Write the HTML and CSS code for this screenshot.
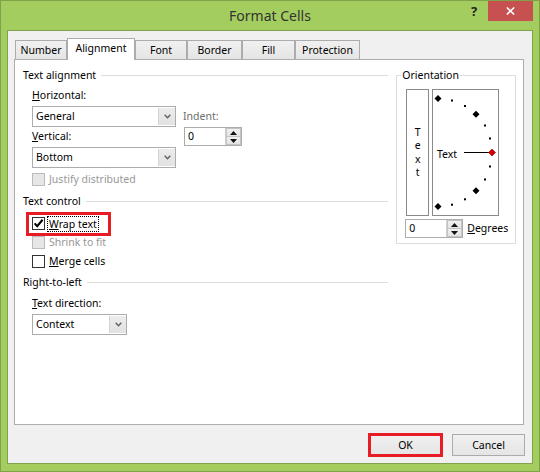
FILE: index.html
```html
<!DOCTYPE html>
<html>
<head>
<meta charset="utf-8">
<title>Format Cells</title>
<link rel="stylesheet" href="styles.css">
</head>
<body>
<div class="window">
  <div class="titlebar">
    <div class="tb-spacer"></div>
    <div class="title">Format Cells</div>
    <div class="controls">
      <span class="help">?</span>
      <span class="close"><svg width="9" height="8" viewBox="0 0 9 8"><path d="M0.8 0.5 L8.2 7.5 M8.2 0.5 L0.8 7.5" stroke="#fff" stroke-width="1.6" fill="none"/></svg></span>
    </div>
  </div>
  <div class="client">
    <div class="tabs">
      <div class="tab tab-number">Number</div>
      <div class="tab tab-align active">Alignment</div>
      <div class="tab tab-font">Font</div>
      <div class="tab tab-border">Border</div>
      <div class="tab tab-fill">Fill</div>
      <div class="tab tab-prot">Protection</div>
    </div>
    <div class="panel">
      <div class="left">
        <div class="section-head"><span>Text alignment</span><i class="rule"></i></div>
        <div class="align-block">
          <div class="col-main">
            <div class="label"><u>H</u>orizontal:</div>
            <div class="combo combo-wide">
              <span class="val">General</span>
              <span class="drop"><svg width="7" height="5" viewBox="0 0 7 5"><path d="M0.7 0.8 L3.5 3.8 L6.3 0.8" stroke="#606060" stroke-width="1.4" fill="none"/></svg></span>
            </div>
            <div class="label label-v"><u>V</u>ertical:</div>
            <div class="combo combo-wide">
              <span class="val">Bottom</span>
              <span class="drop"><svg width="7" height="5" viewBox="0 0 7 5"><path d="M0.7 0.8 L3.5 3.8 L6.3 0.8" stroke="#606060" stroke-width="1.4" fill="none"/></svg></span>
            </div>
          </div>
          <div class="col-indent">
            <div class="label dim">Indent:</div>
            <div class="spin spin-indent">
              <span class="val">0</span>
              <span class="spinbtns">
                <span class="sb"><svg width="7" height="4" viewBox="0 0 7 4"><path d="M3.5 0 L7 4 L0 4 Z" fill="#111"/></svg></span>
                <span class="sb"><svg width="7" height="4" viewBox="0 0 7 4"><path d="M0 0 L7 0 L3.5 4 Z" fill="#111"/></svg></span>
              </span>
            </div>
          </div>
        </div>
        <div class="check check-justify disabled"><span class="box"></span><span class="ctext">Justify distributed</span></div>

        <div class="section-head head-control"><span>Text control</span><i class="rule"></i></div>
        <div class="check check-wrap highlight"><span class="box"><svg width="11" height="11" viewBox="0 0 11 11"><path d="M1.6 5.4 L4.2 8.2 L9.6 1.8" stroke="#000" stroke-width="2.1" fill="none"/></svg></span><span class="ctext focus"><u>W</u>rap text</span></div>
        <div class="check check-row disabled"><span class="box"></span><span class="ctext">Shrink to fit</span></div>
        <div class="check check-row"><span class="box"></span><span class="ctext"><u>M</u>erge cells</span></div>

        <div class="section-head head-rtl"><span>Right-to-left</span><i class="rule"></i></div>
        <div class="label label-dir"><u>T</u>ext direction:</div>
        <div class="combo combo-ctx">
          <span class="val">Context</span>
          <span class="drop"><svg width="7" height="5" viewBox="0 0 7 5"><path d="M0.7 0.8 L3.5 3.8 L6.3 0.8" stroke="#606060" stroke-width="1.4" fill="none"/></svg></span>
        </div>
      </div>

      <fieldset class="orient">
        <legend>Orientation</legend>
        <div class="orient-body">
          <div class="orient-boxes">
            <div class="vtext"><span>T</span><span>e</span><span>x</span><span>t</span></div>
            <div class="dial">
              <svg width="65" height="125" viewBox="0 0 65 125">
                <g fill="#000">
                  <path d="M5 5 L8.5 8.5 L5 12 L1.5 8.5 Z"/>
                  <rect x="18" y="9.5" width="2" height="2"/>
                  <rect x="31" y="15" width="2" height="2"/>
                  <path d="M43 20.8 L46.5 24.3 L43 27.8 L39.5 24.3 Z"/>
                  <rect x="51" y="34.5" width="2" height="2"/>
                  <rect x="56" y="47.5" width="2" height="2"/>
                  <rect x="56" y="75.5" width="2" height="2"/>
                  <rect x="51" y="88.5" width="2" height="2"/>
                  <path d="M43 97.2 L46.5 100.7 L43 104.2 L39.5 100.7 Z"/>
                  <rect x="31" y="108.3" width="2" height="2"/>
                  <rect x="18" y="113.7" width="2" height="2"/>
                  <path d="M5 113 L8.5 116.5 L5 120 L1.5 116.5 Z"/>
                </g>
                <line x1="31" y1="62.5" x2="56" y2="62.5" stroke="#000" stroke-width="1"/>
                <path d="M59 59 L62.5 62.5 L59 66 L55.5 62.5 Z" fill="#d80000" stroke="#7a0000" stroke-width="0.6"/>
                <text x="4" y="68" class="dial-text">Text</text>
              </svg>
            </div>
          </div>
          <div class="deg-row">
            <div class="spin spin-deg">
              <span class="val">0</span>
              <span class="spinbtns">
                <span class="sb"><svg width="7" height="4" viewBox="0 0 7 4"><path d="M3.5 0 L7 4 L0 4 Z" fill="#111"/></svg></span>
                <span class="sb"><svg width="7" height="4" viewBox="0 0 7 4"><path d="M0 0 L7 0 L3.5 4 Z" fill="#111"/></svg></span>
              </span>
            </div>
            <span class="deg-label"><u>D</u>egrees</span>
          </div>
        </div>
      </fieldset>
    </div>
    <div class="buttons">
      <div class="btn btn-ok">OK</div>
      <div class="btn btn-cancel">Cancel</div>
    </div>
  </div>
</div>
</body>
</html>
```

FILE: styles.css
```css
*, *::before, *::after { box-sizing: border-box; }

body {
  margin: 0;
  font-family: "Noto Sans", "Open Sans", sans-serif;
  font-size: 10.5px;
  line-height: 15px;
  color: #000;
}

u { text-decoration: underline; text-underline-offset: 1px; }

.window {
  width: 540px;
  height: 472px;
  background: #a3cd5f;
  border: 1px solid #7fa24a;
  padding: 0 6px 7px 6px;
  display: flex;
  flex-direction: column;
}

.titlebar {
  height: 29px;
  display: grid;
  grid-template-columns: 1fr auto 1fr;
  align-items: start;
}

.title {
  font-size: 14px;
  line-height: 20px;
  padding-top: 5px;
  color: #333;
}

.controls {
  justify-self: end;
  display: flex;
  align-items: flex-start;
}

.help {
  font-size: 13px;
  font-weight: bold;
  line-height: 20px;
  color: #222;
  width: 8px;
  text-align: center;
  margin-right: 10px;
}

.close {
  width: 45px;
  height: 20px;
  background: #c75050;
  display: flex;
  align-items: center;
  justify-content: center;
}

.client {
  flex: 1;
  border: 1px solid #7fa24a;
  background: #f0f0f0;
  padding: 7px 7px 0 0;
  display: flex;
  flex-direction: column;
}

/* tabs */
.tabs {
  display: flex;
  align-items: flex-end;
  margin-left: 7px;
}

.tab {
  height: 19px;
  border: 1px solid #acacac;
  border-bottom: none;
  background: linear-gradient(#f0f0f0, #e5e5e5);
  padding-top: 2px;
  text-align: center;
  line-height: 15px;
}

.tab.active {
  height: 22px;
  background: #fff;
  margin-bottom: -1px;
  position: relative;
  z-index: 1;
}

.tab-number { width: 52px; }
.tab-align { width: 68px; }
.tab-font { width: 52px; }
.tab-border { width: 55px; }
.tab-fill { width: 53px; }
.tab-prot { width: 65px; }

.panel {
  margin-left: 6px;
  width: 510px;
  height: 366px;
  background: #fff;
  border: 1px solid #adadad;
  padding: 8px 7px 0 8px;
  display: flex;
  align-items: flex-start;
}

.left {
  width: 366px;
  display: flex;
  flex-direction: column;
}

.section-head {
  display: flex;
  align-items: center;
  gap: 5px;
  height: 15px;
}

.rule {
  flex: 1;
  height: 1px;
  background: #dcdcdc;
}

.head-control { margin-top: 7px; }
.head-rtl { margin-top: 6px; }

.label { margin-top: 5px; margin-left: 9px; }
.label-v { margin-top: 2px; }
.label-dir { margin-top: 6px; }

.dim { color: #6d6d6d; }

.align-block { display: flex; margin-left: 9px; }
.align-block .label { margin-left: 0; }

.col-main { width: 144px; display: flex; flex-direction: column; }
.col-indent { margin-left: 7px; padding-top: 21px; display: flex; flex-direction: column; }

.combo {
  display: flex;
  height: 21px;
  margin-top: 3px;
  border: 1px solid #acacac;
  background: #fff;
}

.combo .val {
  flex: 1;
  padding-left: 3px;
  line-height: 19px;
}

.combo .drop {
  width: 17px;
  margin: 1px 0 1px 0;
  background: linear-gradient(#ececec, #e2e2e2);
  border-left: 1px solid #d4d4d4;
  display: flex;
  align-items: center;
  justify-content: center;
}

.combo-wide { width: 144px; }
.combo-ctx { width: 95px; margin-left: 9px; }

.spin {
  display: flex;
  height: 19px;
  border: 1px solid #acacac;
  background: #fff;
}

.spin .val {
  flex: 1;
  padding-left: 3px;
  line-height: 17px;
}

.spinbtns {
  width: 16px;
  display: flex;
  flex-direction: column;
  border-left: 1px solid #d0d0d0;
}

.sb {
  flex: 1;
  background: linear-gradient(#f0f0f0, #e3e3e3);
  border: 1px solid #c4c4c4;
  display: flex;
  align-items: center;
  justify-content: center;
}

.sb + .sb { border-top: none; }

.spin-indent { width: 58px; margin-top: 3px; margin-left: 1px; }
.spin-deg { width: 58px; }

/* checkboxes */
.check {
  display: flex;
  align-items: center;
  height: 15px;
  margin-left: 9px;
}

.check .box {
  width: 13px;
  height: 13px;
  border: 1px solid #333;
  background: #fff;
  margin-right: 4px;
  display: flex;
  align-items: center;
  justify-content: center;
}

.check.disabled .box {
  border-color: #bcbcbc;
  background: #e6e6e6;
}

.check.disabled .ctext { color: #979797; }

.check-justify { margin-top: 4px; }
.check-wrap { margin-top: 7px; position: relative; }
.check-row { margin-top: 4px; }

.check-wrap .box { margin-right: 3px; }

.focus {
  outline: 1px dotted #000;
  padding: 0 1px;
  line-height: 14px;
}

.highlight::after {
  content: "";
  position: absolute;
  left: -6px;
  top: -4px;
  width: 85px;
  height: 24px;
  border: 3px solid #e81c24;
}

/* orientation */
.orient {
  margin: 0 0 0 8px;
  padding: 0;
  width: 120px;
  min-width: 0;
  border: 1px solid #dcdcdc;
}

.orient legend {
  padding: 0 1px;
  margin-left: 4px;
  line-height: 15px;
}

.orient-body {
  padding: 6px 0 5px 8px;
}

.orient-boxes {
  display: flex;
  gap: 3px;
}

.vtext {
  width: 23px;
  height: 127px;
  margin-left: 1px;
  border: 1px solid #8a8a8a;
  display: flex;
  flex-direction: column;
  align-items: center;
  justify-content: center;
  line-height: 13.5px;
}

.dial {
  width: 67px;
  height: 127px;
  border: 1px solid #8a8a8a;
}

.dial svg { display: block; }

.dial-text {
  font-family: "Noto Sans", "Open Sans", sans-serif;
  font-size: 10.5px;
  fill: #000;
}

.deg-row {
  display: flex;
  align-items: center;
  margin-top: 3px;
}

.deg-label { margin-left: 4px; }

/* buttons */
.buttons {
  margin-left: 6px;
  width: 511px;
  margin-top: 9px;
  display: flex;
  justify-content: flex-end;
  gap: 9px;
}

.btn {
  width: 73px;
  height: 22px;
  border: 1px solid #acacac;
  background: linear-gradient(#f0f0f0, #e5e5e5);
  text-align: center;
  line-height: 20px;
}

.btn-ok {
  outline: 3px solid #e81c24;
  outline-offset: -2px;
  margin-right: 1px;
}
```
